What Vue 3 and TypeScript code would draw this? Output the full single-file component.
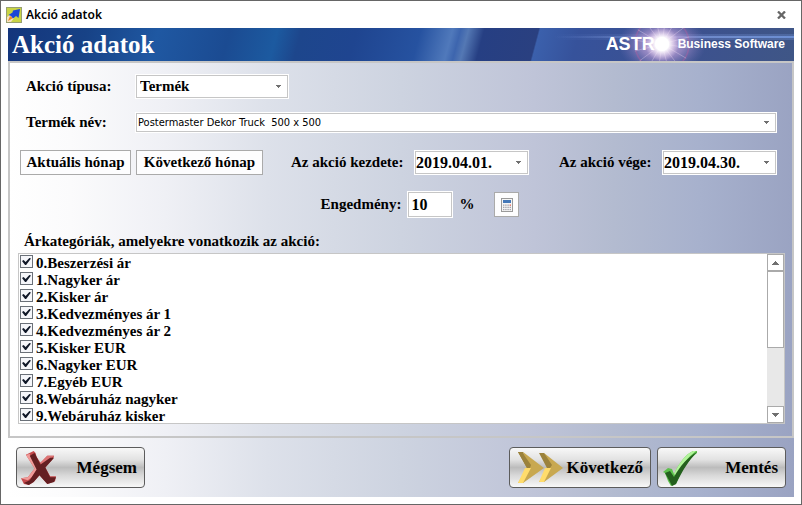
<script setup lang="ts">
import { ref } from 'vue'

interface Category {
  label: string
  checked: boolean
}

const kind = ref('Termék')
const product = ref('Postermaster Dekor Truck \u00a0500 x 500')
const startDate = ref('2019.04.01.')
const endDate = ref('2019.04.30.')
const discount = ref('10')

const categories = ref<Category[]>(
  [
    '0.Beszerzési ár',
    '1.Nagyker ár',
    '2.Kisker ár',
    '3.Kedvezményes ár 1',
    '4.Kedvezményes ár 2',
    '5.Kisker EUR',
    '6.Nagyker EUR',
    '7.Egyéb EUR',
    '8.Webáruház nagyker',
    '9.Webáruház kisker',
  ].map((label) => ({ label, checked: true })),
)

const rays = Array.from({ length: 16 }, (_, i) => i * 22.5 + 8)
const keys = [0, 1, 2, 3].flatMap((c) => [0, 1, 2].map((r) => ({ c, r })))
const list = ref<HTMLElement | null>(null)

function scrollList(step: number) {
  list.value?.scrollBy({ top: step * 17 })
}
</script>

<template>
  <div class="window">
    <header class="titlebar">
      <svg class="app-icon" viewBox="0 0 16 16" aria-hidden="true">
        <rect x="0.5" y="0.5" width="15" height="15" fill="#c9d444" stroke="#98a070" />
        <path d="M1 15V10L5 7 8 11 5 15Z" fill="#f7e3c0" />
        <path d="M2 14L4 9 7 11Z" fill="#f08a24" />
        <path d="M14 2L12.500 11 10 9 7 11.500 5 9 2.500 8 6.500 5.500 7 3.500Z" fill="#1b45d8" />
      </svg>
      <span class="caption">Akció adatok</span>
      <button class="close" type="button" aria-label="Bezárás">
        <svg viewBox="0 0 9 8"><path d="M1 0.500L8 7.500M8 0.500L1 7.500" stroke="#666" stroke-width="2.300" /></svg>
      </button>
    </header>

    <main class="content">
      <div class="banner">
        <h1>Akció adatok</h1>
        <div class="brand">
          <svg class="flare" viewBox="0 0 240 33" aria-hidden="true">
            <defs>
              <radialGradient id="halo">
                <stop offset="0" stop-color="#e6c8ee" stop-opacity="0.950" />
                <stop offset="0.5" stop-color="#b79bd4" stop-opacity="0.650" />
                <stop offset="1" stop-color="#7a74b8" stop-opacity="0" />
              </radialGradient>
              <radialGradient id="core">
                <stop offset="0" stop-color="#fff" />
                <stop offset="0.4" stop-color="#fff" stop-opacity="0.950" />
                <stop offset="1" stop-color="#f0d4f4" stop-opacity="0" />
              </radialGradient>
              <linearGradient id="beam">
                <stop offset="0" stop-color="#7fa0e8" stop-opacity="0" />
                <stop offset="0.4" stop-color="#8fa8e8" stop-opacity="0.500" />
                <stop offset="1" stop-color="#7398e0" stop-opacity="0.800" />
              </linearGradient>
            </defs>
            <rect y="6" width="240" height="6" fill="url(#beam)" opacity="0.350" />
            <rect y="8" width="240" height="2" fill="url(#beam)" />
            <ellipse cx="108" cy="16" rx="44" ry="30" fill="url(#halo)" />
            <circle cx="108" cy="16" r="27" fill="none" stroke="#c65a9b" stroke-width="1.500" opacity="0.350" />
            <g stroke="#f8e4fa" stroke-width="0.800" opacity="0.350">
              <path v-for="a in rays" :key="a" d="M108 16h28" :transform="`rotate(${a} 108 16)`" />
            </g>
            <circle cx="108" cy="16" r="17" fill="url(#core)" />
            <circle cx="108" cy="16" r="7" fill="#fff" />
          </svg>
          <span class="brand-name">ASTR</span>
          <span class="brand-line">Business Software</span>
        </div>
      </div>

      <form class="panel" @submit.prevent>
        <div class="row kind-row">
          <label class="first" for="kind">Akció típusa:</label>
          <div class="combo kind">
            <select id="kind" v-model="kind"><option>Termék</option></select>
            <svg viewBox="0 0 5 3"><path d="M0 0H5V1H4V2H3V3H2V2H1V1H0Z" /></svg>
          </div>
        </div>

        <div class="row product-row">
          <label class="first" for="product">Termék név:</label>
          <div class="combo product">
            <select id="product" v-model="product"><option :value="product">{{ product }}</option></select>
            <svg viewBox="0 0 5 3"><path d="M0 0H5V1H4V2H3V3H2V2H1V1H0Z" /></svg>
          </div>
        </div>

        <div class="row dates-row">
          <button class="flat this-month" type="button">Aktuális hónap</button>
          <button class="flat next-month" type="button">Következő hónap</button>
          <label class="start-label" for="start">Az akció kezdete:</label>
          <div class="combo date">
            <select id="start" v-model="startDate"><option>2019.04.01.</option></select>
            <svg viewBox="0 0 5 3"><path d="M0 0H5V1H4V2H3V3H2V2H1V1H0Z" /></svg>
          </div>
          <label class="end-label" for="end">Az akció vége:</label>
          <div class="combo date">
            <select id="end" v-model="endDate"><option>2019.04.30.</option></select>
            <svg viewBox="0 0 5 3"><path d="M0 0H5V1H4V2H3V3H2V2H1V1H0Z" /></svg>
          </div>
        </div>

        <div class="row discount-row">
          <label for="discount">Engedmény:</label>
          <input id="discount" v-model="discount" class="discount" type="text" />
          <span class="percent">%</span>
          <button class="flat calc" type="button" aria-label="Számológép">
            <svg viewBox="0 0 12 14">
              <rect x="0.5" y="0.5" width="11" height="13" fill="#f6f6f6" stroke="#9a9a9a" />
              <rect x="2" y="2" width="8" height="3" fill="#4478b8" />
              <rect v-for="k in keys" :key="`${k.c}-${k.r}`" :x="2 + k.c * 2.2" :y="6.5 + k.r * 2.2" width="1.4" height="1.3" :fill="k.c === 3 && k.r === 0 ? '#e06050' : '#a4a4ac'" />
            </svg>
          </button>
        </div>

        <fieldset class="categories">
          <legend>Árkategóriák, amelyekre vonatkozik az akció:</legend>
          <div class="listbox">
            <div ref="list" class="items">
              <label v-for="c in categories" :key="c.label" class="item">
                <input v-model="c.checked" type="checkbox" />
                <span>{{ c.label }}</span>
              </label>
            </div>
            <div class="scrollbar">
              <button type="button" aria-label="Fel" @click="scrollList(-1)">
                <svg viewBox="0 0 7 4"><path d="M3 0H4V1H5V2H6V3H7V4H0V3H1V2H2V1H3Z" /></svg>
              </button>
              <div class="thumb"></div>
              <div class="track"></div>
              <button type="button" aria-label="Le" @click="scrollList(1)">
                <svg viewBox="0 0 7 4"><path d="M3 4H4V3H5V2H6V1H7V0H0V1H1V2H2V3H3Z" /></svg>
              </button>
            </div>
          </div>
        </fieldset>
      </form>

      <footer class="actions">
        <button class="action cancel" type="button">
          <svg viewBox="0 0 37 37" aria-hidden="true">
            <path d="M5 5L13 1 15 3 16 7 20 13 27 6 34 6 33 9 25 18 30 27 36 27 35 32 27 35 19 26 13 33 8 36 3 35 0 29 7 28 14 19Z" fill="#c44a4c" />
            <path d="M5 5L9 4 17 20 11 28 7 31 0 29 7 28 14 19Z" fill="#f09a98" />
            <path d="M27 6L34 6 26 12 21 16 20 13Z" fill="#dd7474" />
            <path d="M9 6L14 3 20 15 30 8 34 8 25 18 30 28 36 28 34 33 27 35 19 26 13 33 8 36 3 34 9 31 16 20Z" fill="#641f22" />
          </svg>
          <span>Mégsem</span>
        </button>
        <button class="action next" type="button">
          <svg viewBox="0 0 46 33" aria-hidden="true">
            <g>
              <path d="M1 1L6 1 13 17 10 17Z" fill="#9b823c" />
              <path d="M6 1L27 17 6 32 1 32 10 17Z" fill="#c8a850" />
              <path d="M1 1L5 1 14 14 13 17H10Z" fill="#9b823c" />
              <path d="M8 17H14L6 32 1 32Z" fill="#ffdc6c" />
            </g>
            <g>
              <path d="M27 2L46 17 27 31 22 31 30 17Z" fill="#c8a850" />
              <path d="M22 2L27 2 35 14 33 17H30Z" fill="#9b823c" />
              <path d="M28 17H34L27 31 22 31Z" fill="#ffdc6c" />
            </g>
          </svg>
          <span>Következő</span>
        </button>
        <button class="action save" type="button">
          <svg viewBox="0 0 36 36" aria-hidden="true">
            <path d="M1 22L6 18 10 19 12 24C17 13 24 4 31 1L35 1 35 3C27 9 20 20 14 34L9 36 6 31 3 23Z" fill="#5cc04c" />
            <path d="M12 24C17 13 24 4 31 1L34 1C26 7 19 16 14 26Z" fill="#b2f49a" />
            <path d="M3 23L8 21 12 27C18 16 26 7 35 2C27 10 20 21 14 34L10 36 8 32Z" fill="#24601e" />
          </svg>
          <span>Mentés</span>
        </button>
      </footer>
    </main>
  </div>
</template>

<style>
body {
  margin: 0;
  background: #fff;
}
</style>

<style scoped>
* {
  box-sizing: border-box;
}

.window {
  border: 1px solid #666;
  padding: 0 7px 7px;
  background: #fff;
  color: #000;
  font: bold 15px/17px 'Liberation Serif', serif;
}

button,
input,
select {
  margin: 0;
  color: inherit;
  font: inherit;
}

button {
  padding: 0;
}

.titlebar {
  display: flex;
  align-items: center;
  height: 27px;
}

.app-icon {
  width: 16px;
  height: 16px;
  margin-right: 4px;
  margin-left: -2px;
}

.caption {
  flex: 1;
  font: 600 12px/16px 'Noto Sans', sans-serif;
}

.close {
  display: flex;
  padding: 4px 8px;
  border: 0;
  background: none;
}

.close svg {
  width: 9px;
  height: 8px;
}

.content {
  background: linear-gradient(90deg, #fff, #fbfbfc 8%, #eff0f5 20%, #dde1ea 33%, #cdd3e0 50%, #bfc4d8 67%, #b3bbd0 77%, #a7b1cd 88%, #9aa3c2);
}

.banner {
  position: relative;
  display: flex;
  align-items: center;
  justify-content: space-between;
  height: 33px;
  padding: 0 9px 0 4px;
  overflow: hidden;
  color: #fff;
  background:
    linear-gradient(105deg, #14357c, #174286 10%, #1f58a2 19%, #1b4b92 28%, #1c5aa0 34%, #1d468c 37%, #1f4590 44%, #2652a0 52%, #5079bb 56%, #3d65ae 57%, #5478b4 58%, #263f83 60%, #2a4080 66.800%, #3b60ac 67%, #36529b 72%, #3c5190 85%, #3f5686);
}

h1 {
  z-index: 1;
  margin: 0;
  font-size: 25px;
  line-height: 32px;
}

.brand {
  display: flex;
  align-items: center;
  gap: 23px;
  font-family: 'Liberation Sans', sans-serif;
}

.flare {
  position: absolute;
  top: 0;
  right: 0;
  width: 240px;
  height: 33px;
}

.brand-name,
.brand-line {
  z-index: 1;
}

.brand-name {
  font-size: 18px;
}

.brand-line {
  font-size: 12px;
}

.panel {
  padding: 11px 7px 12px 8px;
  border: 2px solid #c6c6c6;
}

.row {
  display: flex;
  align-items: center;
}

.first {
  width: 117px;
  padding-left: 8px;
}

.combo {
  position: relative;
  height: 25px;
  border: 1px solid #fff;
}

.combo select {
  display: block;
  width: 100%;
  height: 100%;
  padding: 0 16px 0 3px;
  border: 1px solid #c6c6c6;
  border-radius: 0;
  appearance: none;
  background: #fff;
}

.combo svg {
  position: absolute;
  top: 10px;
  right: 7px;
  width: 5px;
  height: 3px;
  fill: #707070;
  pointer-events: none;
}

.kind {
  width: 154px;
}

.product-row {
  margin-top: 13px;
  padding-right: 8px;
}

.product {
  flex: 1;
  height: 21px;
}

.product select {
  padding-left: 1px;
  font: 11px/15px 'DejaVu Sans Condensed', 'Noto Sans', sans-serif;
}

.product svg {
  top: 8px;
}

.dates-row {
  margin-top: 17px;
  padding: 0 8px 0 2px;
}

.flat {
  height: 25px;
  border: 1px solid #aaa;
  background: #fdfdfe;
  white-space: nowrap;
}

.this-month {
  width: 111px;
}

.next-month {
  width: 127px;
  margin-left: 5px;
}

.start-label {
  width: 117px;
  margin-left: 28px;
}

.end-label {
  width: 97px;
  margin-left: auto;
}

.date {
  width: 115px;
  margin-left: 6px;
}

.date select {
  padding-left: 0;
  font-size: 16px;
}

.discount-row {
  justify-content: center;
  margin-top: 16px;
  padding-left: 37px;
}

.discount {
  width: 44px;
  height: 25px;
  margin: 1px 1px 1px 7px;
  padding: 0 2px;
  border: 1px solid #c6c6c6;
  outline: 1px solid #fff;
  font-size: 16px;
}

.percent {
  margin-left: 6px;
}

.calc {
  display: flex;
  align-items: center;
  justify-content: center;
  width: 25px;
  margin-left: 20px;
}

.calc svg {
  width: 12px;
  height: 14px;
}

.categories {
  min-width: 0;
  margin: 0;
  padding: 0;
  border: 0;
}

legend {
  padding: 15px 6px 3px;
}

.listbox {
  display: flex;
  border: 1px solid #c6c6c6;
  background: #fff;
}

.items {
  flex: 1;
  height: 169px;
  padding: 1px;
  overflow: hidden;
}

.item {
  display: flex;
  align-items: flex-start;
  gap: 3px;
  height: 17px;
}

.item input {
  display: grid;
  place-content: center;
  width: 13px;
  height: 13px;
  border: 1px solid #6a7078;
  appearance: none;
  background: #f5f6fa;
}

.item input:checked::before {
  width: 9px;
  height: 7px;
  background: #101828;
  clip-path: polygon(0 42%, 18% 30%, 40% 58%, 82% 0, 100% 8%, 46% 100%, 34% 100%);
  content: '';
}

.scrollbar {
  display: flex;
  flex-direction: column;
  width: 17px;
}

.scrollbar button {
  display: grid;
  flex: none;
  place-content: center;
  height: 17px;
  border: 1px solid #aaa;
  background: #fff;
}

.scrollbar svg {
  width: 7px;
  height: 4px;
  fill: #707070;
}

.thumb {
  flex: 76;
  border: 1px solid #aaa;
  background: #fff;
}

.track {
  flex: 59;
  background: #e8e8e8;
}

.actions {
  display: flex;
  gap: 6px;
  padding: 9px 8px;
}

.action {
  display: flex;
  align-items: center;
  justify-content: space-between;
  width: 129px;
  height: 41px;
  padding: 0 7px 0 4px;
  border: 1px solid #5c5c5c;
  border-radius: 4px;
  background: linear-gradient(#f8f8f8, #e2e2e2 30%, #bcbcbc 50%, #d8d8d8 70%, #f8f8f8);
  font-size: 17px;
}

.action svg {
  width: 36px;
  height: 36px;
}

.cancel {
  margin-right: auto;
}

.next {
  width: 142px;
  padding-left: 7px;
}

.next svg {
  width: 46px;
  height: 33px;
}
</style>
